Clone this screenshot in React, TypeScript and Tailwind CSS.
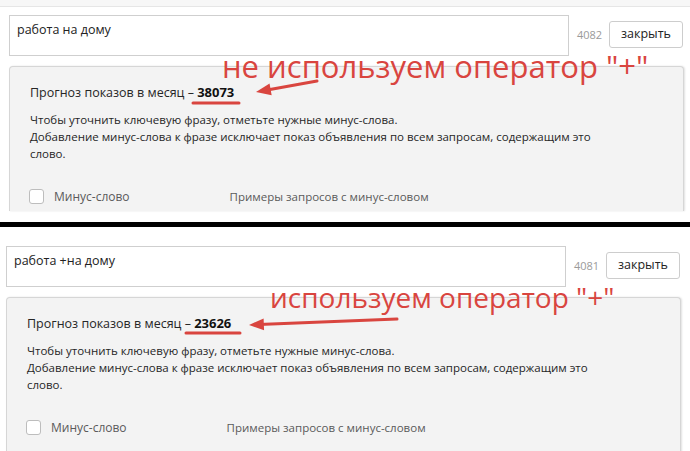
const FONT = "font-['Open_Sans','Liberation_Sans',sans-serif]";

type SectionProps = {
  query: string;
  counter: string;
  forecast: string;
  padLeft: string;
  padTop: string;
  panelHeight: string;
  note: string;
  noteClass: string;
  arrow: { x1: number; y1: number; x2: number; y2: number };
  underline: { x1: number; x2: number; y: number };
};

function Arrow({ x1, y1, x2, y2 }: SectionProps["arrow"]) {
  // head points at x2,y2
  const ang = Math.atan2(y2 - y1, x2 - x1);
  const len = 16;
  const spread = 0.38;
  const a = [x2 - len * Math.cos(ang - spread), y2 - len * Math.sin(ang - spread)];
  const b = [x2 - len * Math.cos(ang + spread), y2 - len * Math.sin(ang + spread)];
  const mx = x2 - 10 * Math.cos(ang);
  const my = y2 - 10 * Math.sin(ang);
  return (
    <>
      <line x1={x1} y1={y1} x2={mx} y2={my} stroke="#d9453f" strokeWidth={3} strokeLinecap="round" />
      <polygon points={`${x2},${y2} ${a[0]},${a[1]} ${b[0]},${b[1]}`} fill="#d9453f" />
    </>
  );
}

function Section(p: SectionProps) {
  return (
    <div className={`relative ${p.padLeft} ${p.padTop}`}>
      <div className="flex items-start">
        <div className="mt-[8px] h-[41px] w-[560px] border border-[#cfcfcf] bg-white px-[7px] pt-[5px] text-[12.5px] leading-[17px] text-[#222]">
          {p.query}
        </div>
        <div className="ml-[8px] mt-[21px] w-[24px] text-[11px] leading-[14px] text-[#9a9a9a]">{p.counter}</div>
        <button className="ml-[8px] mt-[14px] h-[27px] w-[74px] rounded-[3px] border border-[#cdcdcd] bg-white text-[12.5px] text-[#222]">
          закрыть
        </button>
      </div>
      <div
        className={`mt-[10px] w-[675px] ${p.panelHeight} overflow-hidden rounded-t-[4px] border border-b-0 border-[#d6d6d6] bg-[#f3f3f3] pl-[20px] pt-[17px] text-[11.5px] leading-[17px] text-[#262626] shadow-[1px_0_2px_rgba(0,0,0,0.12)]`}
      >
        <div className="text-[12.5px]">
          Прогноз показов в месяц – <span className="text-[13px] font-bold text-[#111]">{p.forecast}</span>
        </div>
        <div className="mt-[10px]">
          Чтобы уточнить ключевую фразу, отметьте нужные минус-слова.
          <br />
          Добавление минус-слова к фразе исключает показ объявления по всем запросам, содержащим это
          <br />
          слово.
        </div>
        <div className="mt-[26px] flex items-center text-[12px] text-[#5a5a5a]">
          <span className="-ml-[1px] h-[15px] w-[15px] rounded-[3px] border border-[#bdbdbd] bg-white" />
          <span className="ml-[10px]">Минус-слово</span>
          <span className="ml-[100px] text-[11.5px]">Примеры запросов с минус-словом</span>
        </div>
      </div>
      <svg className="pointer-events-none absolute left-0 top-0" width={690} height={240}>
        <line
          x1={p.underline.x1}
          y1={p.underline.y}
          x2={p.underline.x2}
          y2={p.underline.y}
          stroke="#d9453f"
          strokeWidth={3}
          strokeLinecap="round"
        />
        <Arrow {...p.arrow} />
      </svg>
      <div className={`pointer-events-none absolute whitespace-nowrap leading-none text-[#d9453f] ${p.noteClass}`}>
        {p.note}
      </div>
    </div>
  );
}

export default function App() {
  return (
    <div className={`h-[451px] w-[690px] overflow-hidden bg-white ${FONT}`}>
      <div className="h-[7px] border-b border-[#e6e6e6] bg-[#f7f7f7]" />
      <Section
        query="работа на дому"
        counter="4082"
        forecast="38073"
        padLeft="pl-[9px]"
        padTop="pt-0"
        panelHeight="h-[145px]"
        note={'не используем оператор "+"'}
        noteClass="left-[222px] top-[44px] text-[31px]"
        arrow={{ x1: 317, y1: 74, x2: 256, y2: 85 }}
        underline={{ x1: 193, x2: 239, y: 96 }}
      />
      <div className="mt-[11px] h-[5px] bg-black" />
      <Section
        query="работа +на дому"
        counter="4081"
        forecast="23626"
        padLeft="pl-[6px]"
        padTop="pt-[11px]"
        panelHeight="h-[160px]"
        note={'используем оператор "+"'}
        noteClass="left-[270px] top-[56px] text-[28px]"
        arrow={{ x1: 397, y1: 92, x2: 249, y2: 98 }}
        underline={{ x1: 186, x2: 240, y: 106 }}
      />
    </div>
  );
}
